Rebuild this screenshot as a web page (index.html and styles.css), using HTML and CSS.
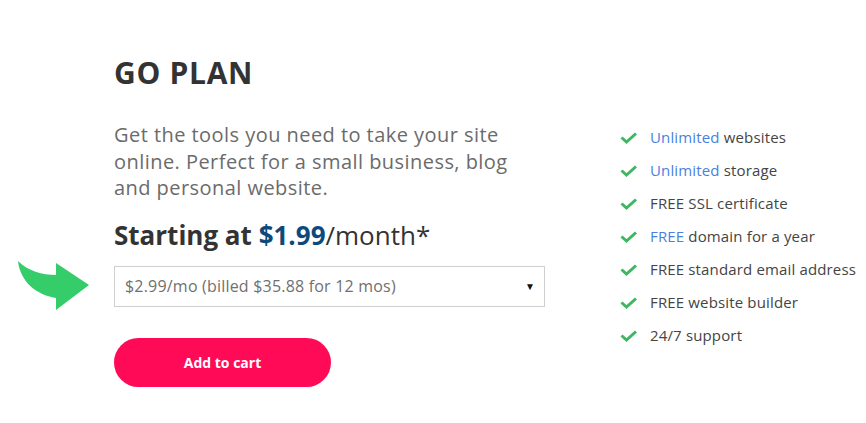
FILE: index.html
```html
<!DOCTYPE html>
<html>
<head>
<title>Go Plan</title>
<link rel="stylesheet" href="styles.css">
</head>
<body>
<div class="plan">
  <div class="plan-main">
    <h1 class="plan-title">GO PLAN</h1>
    <p class="plan-desc">Get the tools you need to take your site online. Perfect for a small business, blog and personal website.</p>
    <p class="plan-price">Starting at <span class="price-num">$1.99</span><span class="price-unit">/month*</span></p>
    <div class="term-row">
      <svg class="term-arrow" width="72" height="52" viewBox="0 0 72 52">
        <path d="M0,2 C10,12 24,16 38,16 L38,4 L71,26 L38,51 L38,39 C18,36 2,22 0,2 Z" fill="#35cc6a"/>
      </svg>
      <div class="term-select">
        <span>$2.99/mo (billed $35.88 for 12 mos)</span>
        <span class="caret">&#9660;</span>
      </div>
    </div>
    <button class="cart-btn">Add to cart</button>
  </div>
  <ul class="features">
    <li><svg class="tick" width="18" height="12" viewBox="0 0 18 12"><polyline points="1.5,5.5 6.5,10 16,1.5" fill="none" stroke="#3fb663" stroke-width="3"/></svg><span><span class="hl">Unlimited</span> websites</span></li>
    <li><svg class="tick" width="18" height="12" viewBox="0 0 18 12"><polyline points="1.5,5.5 6.5,10 16,1.5" fill="none" stroke="#3fb663" stroke-width="3"/></svg><span><span class="hl">Unlimited</span> storage</span></li>
    <li><svg class="tick" width="18" height="12" viewBox="0 0 18 12"><polyline points="1.5,5.5 6.5,10 16,1.5" fill="none" stroke="#3fb663" stroke-width="3"/></svg><span>FREE SSL certificate</span></li>
    <li><svg class="tick" width="18" height="12" viewBox="0 0 18 12"><polyline points="1.5,5.5 6.5,10 16,1.5" fill="none" stroke="#3fb663" stroke-width="3"/></svg><span><span class="hl">FREE</span> domain for a year</span></li>
    <li><svg class="tick" width="18" height="12" viewBox="0 0 18 12"><polyline points="1.5,5.5 6.5,10 16,1.5" fill="none" stroke="#3fb663" stroke-width="3"/></svg><span>FREE standard email address</span></li>
    <li><svg class="tick" width="18" height="12" viewBox="0 0 18 12"><polyline points="1.5,5.5 6.5,10 16,1.5" fill="none" stroke="#3fb663" stroke-width="3"/></svg><span>FREE website builder</span></li>
    <li><svg class="tick" width="18" height="12" viewBox="0 0 18 12"><polyline points="1.5,5.5 6.5,10 16,1.5" fill="none" stroke="#3fb663" stroke-width="3"/></svg><span>24/7 support</span></li>
  </ul>
</div>
</body>
</html>
```
FILE: styles.css
```css
body {
  margin: 0;
  background: #fff;
  font-family: "Open Sans", "Liberation Sans", sans-serif;
  color: #333;
}
.plan {
  display: flex;
  padding: 0 0 0 114px;
}
/* left column */
.plan-main {
  width: 431px;
  flex-shrink: 0;
  padding-top: 55px;
}
.plan-title {
  margin: 0;
  font-size: 30px;
  font-weight: 700;
  letter-spacing: 0.7px;
  color: #333;
  line-height: 36px;
}
.plan-desc {
  margin: 31px 0 0;
  font-size: 20px;
  letter-spacing: 0.45px;
  line-height: 26.5px;
  color: #6b6b6b;
  font-weight: 400;
}
.plan-price {
  margin: 17px 0 0;
  font-size: 26px;
  font-weight: 700;
  color: #333;
  line-height: 32px;
}
.price-num { color: #0d4a7c; }
.price-unit { font-weight: 400; }

.term-row {
  position: relative;
  margin-top: 15px;
}
.term-arrow {
  position: absolute;
  left: -96px;
  top: -7px;
}
.term-select {
  display: flex;
  justify-content: space-between;
  align-items: center;
  height: 39px;
  border: 1px solid #cfcfcf;
  padding: 0 9px 0 10px;
  font-size: 16px;
  letter-spacing: 0.2px;
  color: #707070;
}
.caret {
  font-size: 10px;
  color: #111;
}
.cart-btn {
  margin-top: 31px;
  width: 217px;
  height: 49px;
  border: none;
  border-radius: 25px;
  background: #ff0a57;
  color: #fff;
  font-family: inherit;
  font-size: 14px;
  font-weight: 700;
}
/* right column */
.features {
  list-style: none;
  margin: 0 0 0 75px;
  padding: 120px 0 0;
}
.features li {
  display: flex;
  align-items: center;
  gap: 12px;
  height: 33px;
  font-size: 15px;
  letter-spacing: 0.15px;
  color: #444;
  white-space: nowrap;
}
.tick {
  flex-shrink: 0;
  margin-top: 2px;
}
.hl { color: #4a7fe0; }
```
